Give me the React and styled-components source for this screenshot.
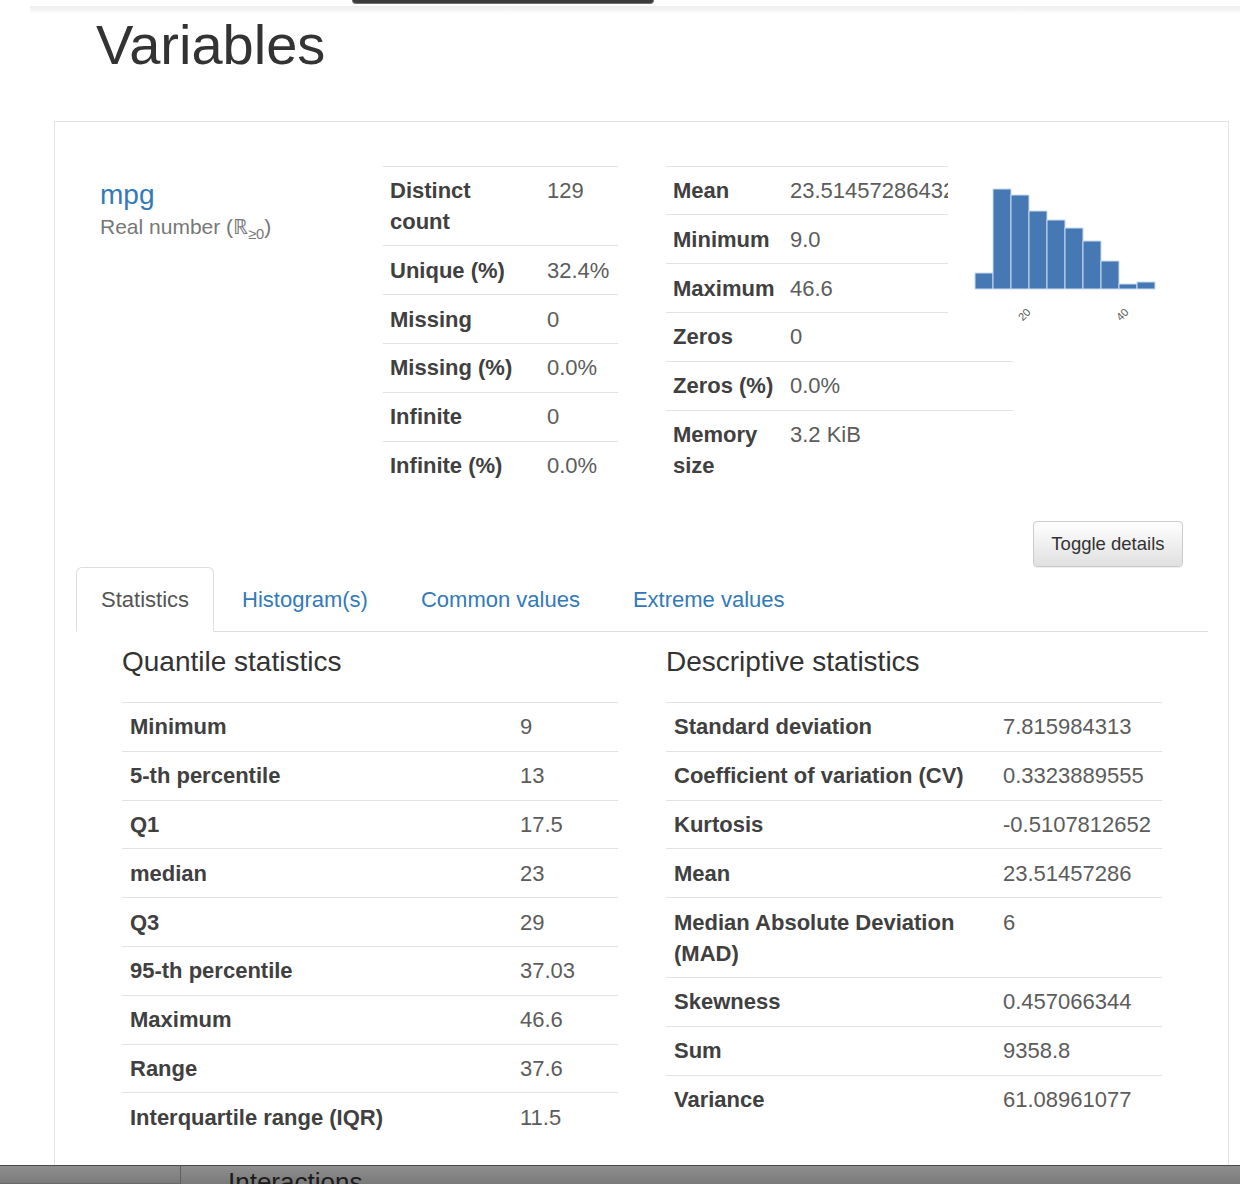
import React from 'react';
import styled, { createGlobalStyle } from 'styled-components';

const GlobalStyle = createGlobalStyle`
  html, body {
    margin: 0;
    padding: 0;
    background: #fff;
  }
  body {
    font-family: "Liberation Sans", Arial, Helvetica, sans-serif;
    font-size: 22px;
    line-height: 1.42857;
    color: #333;
    overflow: hidden;
  }
`;

const Page = styled.div`
  position: relative;
  padding-top: 6px;
  height: 1184px;
  overflow: hidden;
`;

const TopShade = styled.div`
  margin-left: 30px;
  height: 8px;
  background: linear-gradient(#ececec, #ffffff);
`;

const NavStub = styled.div`
  position: absolute;
  top: 0;
  left: 352px;
  width: 300px;
  height: 3px;
  background: #3b3b3b;
  border: 1px solid #707070;
  border-top: none;
  border-radius: 0 0 6px 6px;
`;

const Heading = styled.h1`
  margin: 0 0 45px 96px;
  font-size: 56px;
  font-weight: 400;
  line-height: 1.1;
  color: #333;
`;

const Panel = styled.section`
  margin-left: 54px;
  width: 1175px;
  box-sizing: border-box;
  border: 1px solid #e3e3e3;
  padding: 0 20px 80px 21px;
`;

const TopRow = styled.div`
  display: flex;
  align-items: flex-start;
  padding: 44px 0 0 24px;
`;

const NameCol = styled.div`
  flex: none;
  width: 283px;
  padding-top: 14px;
`;

const VarName = styled.p`
  margin: 0;
  font-size: 28px;
  line-height: 1.1;
  a {
    color: #337ab7;
    text-decoration: none;
  }
  small {
    font-size: 75%;
    color: #777;
  }
  sub {
    font-size: 70%;
    line-height: 0;
  }
`;

const StatList = styled.div`
  flex: none;
  display: flex;
  flex-direction: column;
  width: ${(p) => (p.$width ? `${p.$width}px` : 'auto')};
  margin-right: ${(p) => p.$gap || 0}px;
`;

const StatRow = styled.div`
  display: grid;
  grid-template-columns: ${(p) => p.$label}px minmax(0, 1fr);
  width: ${(p) => (p.$width ? `${p.$width}px` : '100%')};
  border-top: 1px solid #e2e2e2;
`;

const Label = styled.div`
  padding: 8.4px 7px 8.4px ${(p) => p.$indent || 7}px;
  line-height: 31px;
  font-weight: 700;
  color: #404040;
`;

const Value = styled.div`
  padding: 8.4px 7px;
  line-height: 31px;
  color: #5c5c5c;
  white-space: nowrap;
  overflow: hidden;
`;

const RightBlock = styled.div`
  flex: none;
  display: flex;
  flex-direction: column;
`;

const TopPart = styled.div`
  display: flex;
  align-items: flex-start;
`;

const HistoSvg = styled.svg`
  flex: none;
  margin: 4px 0 0 12px;
`;

const ButtonRow = styled.div`
  display: flex;
  justify-content: flex-end;
  margin-top: 32px;
  padding-right: 25px;
`;

const ToggleButton = styled.button`
  height: 46px;
  padding: 0 17.5px;
  font-family: inherit;
  font-size: 18.5px;
  color: #333;
  background: linear-gradient(#ffffff, #e0e0e0);
  border: 1px solid #cccccc;
  border-radius: 4px;
  box-shadow: inset 0 1px 0 rgba(255, 255, 255, 0.15), 0 1px 1px rgba(0, 0, 0, 0.075);
`;

const TabNav = styled.ul`
  display: flex;
  margin: 0;
  padding: 0;
  list-style: none;
  border-bottom: 1px solid #dddddd;
`;

const TabItem = styled.li`
  margin: 0 3px -1px 0;
`;

const TabLink = styled.a`
  display: block;
  padding: 16px 24px;
  line-height: 31px;
  border: 1px solid transparent;
  border-radius: 6px 6px 0 0;
  color: ${(p) => (p.$active ? '#555' : '#337ab7')};
  background: ${(p) => (p.$active ? '#fff' : 'transparent')};
  border-color: ${(p) => (p.$active ? '#dddddd #dddddd transparent' : 'transparent')};
  text-decoration: none;
`;

const TabContent = styled.div`
  display: grid;
  grid-template-columns: 496px 496px;
  column-gap: 48px;
  padding-left: 46px;
`;

const SectionTitle = styled.h4`
  margin: 15px 0 24px;
  font-size: 28px;
  font-weight: 400;
  line-height: 1.1;
  color: #333;
`;

const BottomBar = styled.div`
  position: fixed;
  left: 0;
  right: 0;
  bottom: 0;
  height: 18px;
  display: flex;
  overflow: hidden;
  background: linear-gradient(#8e8e8e, #7a7a7a);
  border-top: 1px solid #4a4a4a;
`;

const BarSegment = styled.div`
  flex: none;
  width: 180px;
  border-right: 1px solid #5f5f5f;
  border-bottom: 1px solid #6a6a6a;
`;

const BarText = styled.div`
  padding: 3px 0 0 47px;
  font-size: 26px;
  line-height: 26px;
  color: #1c1c1c;
  white-space: nowrap;
`;

const basicRows = [
  ['Distinct count', '129'],
  ['Unique (%)', '32.4%'],
  ['Missing', '0'],
  ['Missing (%)', '0.0%'],
  ['Infinite', '0'],
  ['Infinite (%)', '0.0%'],
];

const summaryTop = [
  ['Mean', '23.514572864321607'],
  ['Minimum', '9.0'],
  ['Maximum', '46.6'],
  ['Zeros', '0'],
];

const summaryBottom = [
  ['Zeros (%)', '0.0%'],
  ['Memory size', '3.2 KiB'],
];

const quantiles = [
  ['Minimum', '9'],
  ['5-th percentile', '13'],
  ['Q1', '17.5'],
  ['median', '23'],
  ['Q3', '29'],
  ['95-th percentile', '37.03'],
  ['Maximum', '46.6'],
  ['Range', '37.6'],
  ['Interquartile range (IQR)', '11.5'],
];

const descriptive = [
  ['Standard deviation', '7.815984313'],
  ['Coefficient of variation (CV)', '0.3323889555'],
  ['Kurtosis', '-0.5107812652'],
  ['Mean', '23.51457286'],
  ['Median Absolute Deviation (MAD)', '6'],
  ['Skewness', '0.457066344'],
  ['Sum', '9358.8'],
  ['Variance', '61.08961077'],
];

// bar tops in svg coords, baseline at 119
const bins = [103, 19, 25, 41, 50, 58, 71, 91, 114, 112];

const tabs = ['Statistics', 'Histogram(s)', 'Common values', 'Extreme values'];

const Histogram = () => (
  <HistoSvg width="200" height="160" viewBox="0 0 200 160">
    {bins.map((top, i) => (
      <rect
        key={i}
        x={15 + i * 18}
        y={top}
        width="18"
        height={119 - top}
        fill="#4679b3"
        stroke="#c9daee"
        strokeWidth="1"
      />
    ))}
    <text x="65" y="148" fontSize="11" fill="#555" textAnchor="middle"
      fontFamily="Liberation Sans, Arial, sans-serif" transform="rotate(-45 65 145)">20</text>
    <text x="163" y="148" fontSize="11" fill="#555" textAnchor="middle"
      fontFamily="Liberation Sans, Arial, sans-serif" transform="rotate(-45 163 145)">40</text>
  </HistoSvg>
);

const App = () => {
  return (
    <Page>
      <GlobalStyle />
      <NavStub />
      <TopShade />
      <Heading>Variables</Heading>

      <Panel>
        <TopRow>
          <NameCol>
            <VarName>
              <a href="#mpg">mpg</a>
              <br />
              <small>Real number (ℝ<sub>≥0</sub>)</small>
            </VarName>
          </NameCol>

          <StatList $width={235} $gap={48}>
            {basicRows.map(([k, v]) => (
              <StatRow key={k} $label={157}>
                <Label>{k}</Label>
                <Value>{v}</Value>
              </StatRow>
            ))}
          </StatList>

          <RightBlock>
            <TopPart>
              <StatList $width={282}>
                {summaryTop.map(([k, v]) => (
                  <StatRow key={k} $label={117}>
                    <Label>{k}</Label>
                    <Value>{v}</Value>
                  </StatRow>
                ))}
              </StatList>
              <Histogram />
            </TopPart>
            {summaryBottom.map(([k, v]) => (
              <StatRow key={k} $label={117} $width={347}>
                <Label>{k}</Label>
                <Value>{v}</Value>
              </StatRow>
            ))}
          </RightBlock>
        </TopRow>

        <ButtonRow>
          <ToggleButton>Toggle details</ToggleButton>
        </ButtonRow>

        <TabNav>
          {tabs.map((t, i) => (
            <TabItem key={t}>
              <TabLink href={`#tab${i}`} $active={i === 0}>{t}</TabLink>
            </TabItem>
          ))}
        </TabNav>

        <TabContent>
          <div>
            <SectionTitle>Quantile statistics</SectionTitle>
            <StatList>
              {quantiles.map(([k, v]) => (
                <StatRow key={k} $label={391}>
                  <Label $indent={8}>{k}</Label>
                  <Value>{v}</Value>
                </StatRow>
              ))}
            </StatList>
          </div>
          <div>
            <SectionTitle>Descriptive statistics</SectionTitle>
            <StatList>
              {descriptive.map(([k, v]) => (
                <StatRow key={k} $label={330}>
                  <Label $indent={8}>{k}</Label>
                  <Value>{v}</Value>
                </StatRow>
              ))}
            </StatList>
          </div>
        </TabContent>
      </Panel>

      <BottomBar>
        <BarSegment />
        <BarText>Interactions</BarText>
      </BottomBar>
    </Page>
  );
};

export default App;
